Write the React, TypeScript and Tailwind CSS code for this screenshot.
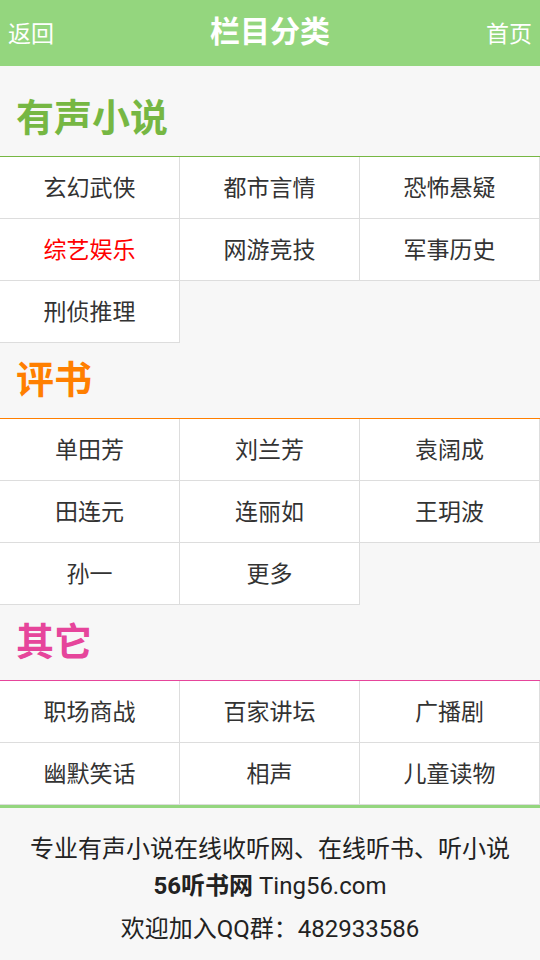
import React from 'react'

type Section = {
  title: string
  color: string
  border: string
  items: { name: string; hot?: boolean }[]
  first?: boolean
}

const sections: Section[] = [
  {
    title: '有声小说',
    color: 'text-[#76b743]',
    border: 'border-[#76b743]',
    first: true,
    items: [
      { name: '玄幻武侠' },
      { name: '都市言情' },
      { name: '恐怖悬疑' },
      { name: '综艺娱乐', hot: true },
      { name: '网游竞技' },
      { name: '军事历史' },
      { name: '刑侦推理' },
    ],
  },
  {
    title: '评书',
    color: 'text-[#ff7f00]',
    border: 'border-[#ff7f00]',
    items: [
      { name: '单田芳' },
      { name: '刘兰芳' },
      { name: '袁阔成' },
      { name: '田连元' },
      { name: '连丽如' },
      { name: '王玥波' },
      { name: '孙一' },
      { name: '更多' },
    ],
  },
  {
    title: '其它',
    color: 'text-[#e6459b]',
    border: 'border-[#e6459b]',
    items: [
      { name: '职场商战' },
      { name: '百家讲坛' },
      { name: '广播剧' },
      { name: '幽默笑话' },
      { name: '相声' },
      { name: '儿童读物' },
    ],
  },
]

export default function App() {
  return (
    <div className="min-h-[960px] bg-[#f7f7f7] font-['Roboto','Noto_Sans_CJK_SC',sans-serif]">
      <header className="h-[66px] bg-[#94d67e] flex items-center justify-between px-2 text-white">
        <a className="text-[23px] w-[60px] mt-1">返回</a>
        <h1 className="text-[30px] font-bold -mt-1">栏目分类</h1>
        <a className="text-[23px] w-[60px] text-right mt-1">首页</a>
      </header>

      {sections.map(s => (
        <section key={s.title}>
          <div className={`${s.first ? 'pt-[15px]' : ''}`}>
            <h2 className={`h-[76px] flex items-center pl-4 text-[38px] font-bold border-b ${s.color} ${s.border}`}>
              {s.title}
            </h2>
          </div>
          <ul className="grid grid-cols-3">
            {s.items.map(item => (
              <li
                key={item.name}
                className={`h-[62px] flex items-center justify-center pt-1 bg-white border-r border-b border-[#dddddd] text-[23px] ${
                  item.hot ? 'text-[#ff0000]' : 'text-[#333333]'
                }`}
              >
                {item.name}
              </li>
            ))}
          </ul>
        </section>
      ))}

      <footer className="border-t-[3px] border-[#94d67e] pt-[23px] pb-6 text-center text-[24px] text-[#222222]">
        <p className="leading-[37px]">专业有声小说在线收听网、在线听书、听小说</p>
        <p className="leading-[37px]">
          <b>56听书网</b> Ting56.com
        </p>
        <p className="leading-[37px] mt-[6px]">欢迎加入QQ群：482933586</p>
      </footer>
    </div>
  )
}
